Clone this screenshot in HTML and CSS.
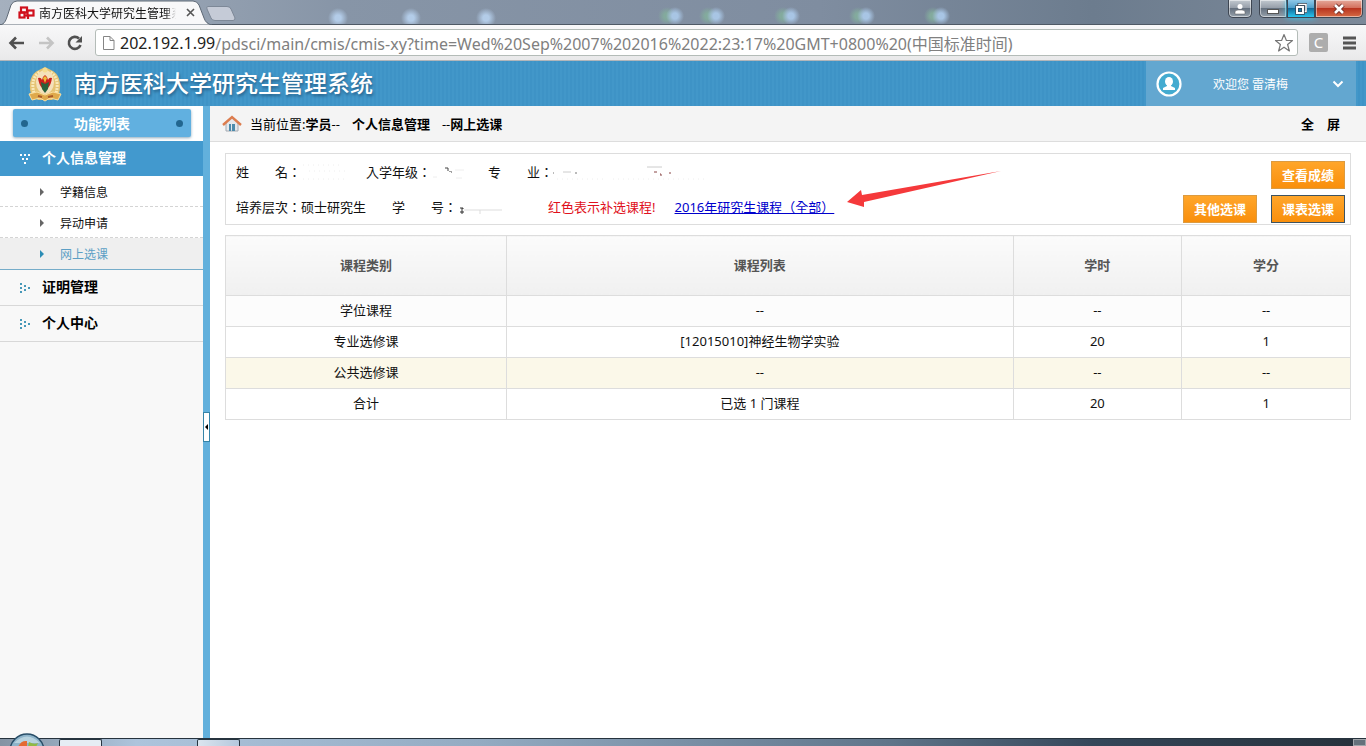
FILE: index.html
```html
<!DOCTYPE html>
<html lang="zh-CN">
<head>
  <meta charset="UTF-8">
  <meta name="viewport" content="width=device-width, initial-scale=1.0">
  <title>南方医科大学研究生管理系统</title>
  <link rel="stylesheet" href="styles.css">
</head>
<body>
  <!-- 标签栏 -->
  <div class="tabstrip">
    <div class="tab">
      <svg class="tab-shape" width="216" height="25" viewBox="0 0 216 25"><path d="M0 25C5 24 6 20 8 14L11 5Q13 1 17 1H193Q197 1 199 5L204 18Q206 24 212 25Z" fill="#f8f8f9" stroke="#5d6875"/></svg>
      <svg class="tab-logo" width="17" height="14" viewBox="0 0 17 14"><g fill="none" stroke="#d0101c" stroke-width="2.2"><rect x="3" y="1.500" width="6" height="5"/><rect x="1.500" y="6.500" width="5" height="5"/><rect x="9.500" y="4.500" width="6" height="5"/><path d="M6 9.500h4V13"/></g></svg>
      <span class="tab-title">南方医科大学研究生管理系统</span>
      <button class="tab-close" aria-label="关闭标签页"><svg width="9" height="9" viewBox="0 0 9 9"><path d="M1 1l7 7M8 1L1 8" stroke="#555" stroke-width="1.6"/></svg></button>
    </div>
    <button class="new-tab" aria-label="新标签页"><svg width="30" height="15" viewBox="0 0 30 15"><path d="M2 .5H21Q24 .5 25 3L29 12Q29 14.500 27 14.500H9Q6 14.500 5 12L1 3Q0 .5 2 .5Z" fill="#c5cbd7" stroke="#7d8897"/></svg></button>
    <div class="window-buttons">
      <button class="win profile" aria-label="用户"><svg width="12" height="12" viewBox="0 0 12 12"><circle cx="6" cy="3.500" r="2.500" fill="#fff"/><path d="M1 11V9q0-2 3-2h4q3 0 3 2v2z" fill="#fff" stroke="#555" stroke-width=".5"/></svg></button>
      <button class="win minimize" aria-label="最小化"><svg width="12" height="12" viewBox="0 0 12 12"><rect x=".5" y="6.500" width="11" height="4" fill="#fff" stroke="#555"/></svg></button>
      <button class="win restore" aria-label="还原"><svg width="12" height="12" viewBox="0 0 12 12"><g fill="none"><path d="M4 4V1.500h7v7H8.500" stroke="#345" stroke-width="3"/><path d="M4 4V1.500h7v7H8.500" stroke="#fff" stroke-width="1.500"/><rect x="2" y="4" width="6" height="6" stroke="#345" stroke-width="3.500"/><rect x="2" y="4" width="6" height="6" stroke="#fff" stroke-width="2"/></g></svg></button>
      <button class="win close" aria-label="关闭"><svg width="12" height="12" viewBox="0 0 12 12"><path d="M2 2l8 8M10 2l-8 8" stroke="#6b2a25" stroke-width="4.500"/><path d="M2 2l8 8M10 2l-8 8" stroke="#fff" stroke-width="2.600"/></svg></button>
    </div>
  </div>

  <!-- 地址栏 -->
  <div class="toolbar">
    <button class="nav" aria-label="后退"><svg width="18" height="16" viewBox="0 0 18 16"><path d="M16 8H3M8 2.500L2.500 8 8 13.500" fill="none" stroke="#505050" stroke-width="2.600"/></svg></button>
    <button class="nav" aria-label="前进"><svg width="18" height="16" viewBox="0 0 18 16"><path d="M2 8h13M10 2.500L15.500 8 10 13.500" fill="none" stroke="#c4c4c4" stroke-width="2.600"/></svg></button>
    <button class="nav" aria-label="刷新"><svg width="18" height="16" viewBox="0 0 18 16"><path d="M14.500 10A6 6 0 1 1 13 3.500" fill="none" stroke="#505050" stroke-width="2.600"/><path d="M16 1v6.500H9.500z" fill="#505050"/></svg></button>
    <div class="omnibox">
      <svg width="13" height="16" viewBox="0 0 13 16"><path d="M1.500 1.500H8L12 5.500V14.500H1.500zM8 1.500V5.500H12" fill="#fff" stroke="#858585"/></svg>
      <label class="host" for="url">202.192.1.99</label>
      <input id="url" type="text" value="/pdsci/main/cmis/cmis-xy?time=Wed%20Sep%2007%202016%2022:23:17%20GMT+0800%20(中国标准时间)">
      <button class="nav" aria-label="收藏"><svg width="20" height="20" viewBox="0 0 20 20"><path d="M10 1.500l2.400 6h6.100l-4.900 4 1.800 6.500-5.400-3.800L4.600 18l1.800-6.500-4.900-4h6.100z" fill="#fff" stroke="#777" stroke-width="1.200" stroke-linejoin="round"/></svg></button>
    </div>
    <button class="extension">C</button>
    <button class="nav" aria-label="菜单"><svg width="13" height="14" viewBox="0 0 13 14"><path d="M0 2h13M0 7h13M0 12h13" stroke="#555" stroke-width="3"/></svg></button>
  </div>

  <!-- 系统头部 -->
  <header class="header">
    <svg class="crest" width="36" height="36" viewBox="0 0 36 36">
      <path d="M4 28C1 17 4 7 12 4L18 1l6 3c8 3 11 13 8 24l-7 6H11z" fill="#e5c374"/>
      <path d="M7 27C4 17 7 9 13 6M29 27c3-10 0-18-6-21" fill="none" stroke="#f9e9b8" stroke-width="3" stroke-dasharray="2 1"/>
      <ellipse cx="18" cy="16" rx="9" ry="12" fill="#f4e1bb"/>
      <path d="M11 12q3-1 4 2l1-3 2-2 2 2 1 3q1-3 4-2-1 7-4 10h-6q-3-3-4-10z" fill="#c9201d"/>
      <path d="M14 16l4 2 4-2-1 7-3 4-3-4z" fill="#29613b"/>
      <path d="M16 12l2-2 2 2-2 5z" fill="#efbd38"/>
      <path d="M2 28l8-2 8 3 8-3 8 2-3 6-8-2-5 3-5-3-8 2z" fill="#dfa94c" stroke="#fae0a1"/>
      <circle cx="18" cy="4" r="2.500" fill="#f5dc91"/>
      <path d="M11 30l4 1M21 31l5-1" stroke="#a95a28" stroke-width="2"/>
    </svg>
    <h1>南方医科大学研究生管理系统</h1>
    <a class="user" href="#">
      <svg width="26" height="26" viewBox="0 0 26 26"><circle cx="13" cy="13" r="11.500" fill="#44abd0" stroke="#fff" stroke-width="2.200"/><ellipse cx="13" cy="10.500" rx="4" ry="4.500" fill="#fff"/><path d="M11 13h4v2l4 2v2H7v-2l4-2z" fill="#fff"/></svg>
      <span>欢迎您 雷清梅</span>
      <svg class="arrow" width="12" height="8" viewBox="0 0 12 8"><path d="M1.500 1.500L6 6l4.500-4.500" fill="none" stroke="#fff" stroke-width="2"/></svg>
    </a>
  </header>

  <div class="main">
    <!-- 左侧菜单 -->
    <nav class="sidebar">
      <div class="menu-head"><h2>功能列表</h2></div>
      <a class="group open" href="#"><svg width="12" height="12" viewBox="0 0 12 12"><path d="M1 1h2v2H1zM5 1h2v2H5zM9 1h2v2H9zM3 5h2v2H3zM7 5h2v2H7zM5 9h2v2H5z" fill="#fff"/></svg>个人信息管理</a>
      <ul class="submenu">
        <li><a href="#">学籍信息</a></li>
        <li><a href="#">异动申请</a></li>
        <li class="active"><a href="#">网上选课</a></li>
      </ul>
      <a class="group" href="#"><svg width="12" height="12" viewBox="0 0 12 12"><path d="M1 1h2v2H1zM1 5h2v2H1zM1 9h2v2H1zM5 3h2v2H5zM5 7h2v2H5zM9 5h2v2H9z" fill="#4798b8"/></svg>证明管理</a>
      <a class="group" href="#"><svg width="12" height="12" viewBox="0 0 12 12"><path d="M1 1h2v2H1zM1 5h2v2H1zM1 9h2v2H1zM5 3h2v2H5zM5 7h2v2H5zM9 5h2v2H9z" fill="#4798b8"/></svg>个人中心</a>
    </nav>
    <div class="splitter"><button class="collapse" aria-label="收起菜单"></button></div>

    <div class="content">
      <div class="breadcrumb">
        <svg width="20" height="18" viewBox="0 0 20 18"><path d="M4 8v8h12V8l-6-6z" fill="#e5e8ec" stroke="#a4aab2"/><path d="M7 9h2v7H7zM10 9h3v7h-3z" fill="#4d8bab"/><path d="M1 10L10 2l9 8" fill="none" stroke="#dc7d4f" stroke-width="2.400"/></svg>
        <span>当前位置:<b>学员</b>--</span>
        <b>个人信息管理</b>
        <span>--<b>网上选课</b></span>
        <a class="fullscreen" href="#">全&emsp;屏</a>
      </div>

      <div class="info">
        <div class="fields">
          <div class="line">
            <span>姓&emsp;&emsp;名：</span>
            <span class="value name"><svg width="60" height="20" viewBox="0 0 60 20"><path d="M2 3h38M8 9h40M2 17h45" stroke="#eee" stroke-dasharray="1 4"/></svg></span>
            <span>入学年级：</span>
            <span class="value grade"><svg width="40" height="20" viewBox="0 0 40 20"><path d="M14 6h3v3M20 10h1M19 9v1" stroke="#444" fill="none"/><path d="M2 15h4M24 8h9M25 16h6" stroke="#eee"/></svg></span>
            <span>专&emsp;&emsp;业：</span>
            <span class="value major"><svg width="166" height="20" viewBox="0 0 166 20"><path d="M0 11h1M22 11h2" stroke="#777"/><path d="M10 10h8M94 5h15" stroke="#ccc"/><path d="M101 10h3M107 12h1v2M116 11h2" stroke="#844" fill="none"/><path d="M4 17h50M60 17h94" stroke="#eee" stroke-dasharray="1 4"/></svg></span>
          </div>
          <div class="line">
            <span>培养层次：硕士研究生</span>
            <span class="student-no">学&emsp;&emsp;号：</span>
            <span class="value number"><svg width="50" height="20" viewBox="0 0 50 20"><path d="M3 11h3v1H4M3 15h4M5 13v4" stroke="#333" fill="none"/><path d="M7 13h38M23 13v4" stroke="#ddd"/></svg></span>
            <span class="notice">红色表示补选课程!</span>
            <a class="courses" href="#">2016年研究生课程（全部）</a>
            <svg class="pointer" width="154" height="38" viewBox="0 0 154 38"><path d="M0 32L14 20L15 25L154 1L17 32L17 37Z" fill="#f5393b"/></svg>
          </div>
        </div>
        <div class="actions">
          <button>查看成绩</button>
          <div class="pair">
            <button>其他选课</button>
            <button class="current">课表选课</button>
          </div>
        </div>
      </div>

      <table class="course-table">
        <thead>
          <tr><th class="type">课程类别</th><th class="list">课程列表</th><th class="num">学时</th><th class="num">学分</th></tr>
        </thead>
        <tbody>
          <tr class="odd"><td>学位课程</td><td>--</td><td>--</td><td>--</td></tr>
          <tr><td>专业选修课</td><td>[12015010]神经生物学实验</td><td>20</td><td>1</td></tr>
          <tr class="hover"><td>公共选修课</td><td>--</td><td>--</td><td>--</td></tr>
          <tr><td>合计</td><td>已选 1 门课程</td><td>20</td><td>1</td></tr>
        </tbody>
      </table>
    </div>
  </div>

  <!-- 任务栏 -->
  <div class="taskbar">
    <svg class="start" width="36" height="14" viewBox="0 0 36 14"><circle cx="18" cy="18" r="17" fill="#8eb4ca" stroke="#294e68" stroke-width="1.500"/><path d="M5 10q13-13 26 0z" fill="#b8d3df"/><path d="M9 14q3-7 9-6v6H9z" fill="#e56a32"/><path d="M20 9q5 3 9 1l-2 4h-8z" fill="#91b944"/></svg>
    <span class="task first"></span>
    <span class="task"></span>
    <span class="show-desktop"></span>
  </div>
</body>
</html>
```

FILE: styles.css
```css
* {
  box-sizing: border-box;
}

body {
  margin: 0;
  height: 100vh;
  display: flex;
  flex-direction: column;
  overflow: hidden;
  background: #fff;
  color: #111;
  font-family: "Noto Sans", "Noto Sans CJK SC", sans-serif;
  font-size: 13px;
}

a {
  color: inherit;
  text-decoration: none;
}

button,
input {
  margin: 0;
  padding: 0;
  border: none;
  background: none;
  font-family: inherit;
}

svg {
  display: block;
  flex-shrink: 0;
}

/* browser */
.tabstrip {
  display: flex;
  flex-shrink: 0;
  height: 25px;
  border-bottom: 1px solid #4f5965;
  background:
    radial-gradient(circle at 338px 18px, #b3cce8 3px, transparent 10px),
    radial-gradient(circle at 411px 18px, #b3cce8 3px, transparent 10px),
    radial-gradient(circle at 486px 18px, #b3cce8 3px, transparent 10px),
    radial-gradient(circle at 675px 16px, #a8c5e4 3px, transparent 9px),
    radial-gradient(circle at 667px 16px, #83aa9d 3px, transparent 9px),
    radial-gradient(circle at 716px 16px, #a8c5e4 3px, transparent 9px),
    radial-gradient(circle at 708px 16px, #83aa9d 3px, transparent 9px),
    radial-gradient(circle at 791px 16px, #a8c5e4 3px, transparent 9px),
    radial-gradient(circle at 783px 16px, #83aa9d 3px, transparent 9px),
    radial-gradient(circle at 866px 16px, #a8c5e4 3px, transparent 9px),
    radial-gradient(circle at 858px 16px, #83aa9d 3px, transparent 9px),
    radial-gradient(circle at 941px 16px, #a8c5e4 3px, transparent 9px),
    radial-gradient(circle at 933px 16px, #83aa9d 3px, transparent 9px),
    linear-gradient(90deg, #a5b0be, #8795a7 25%, #7f8da0 60%, #6c7c8e 80%, #7c8999);
  background-size: 100% 100%, 100% 100%, 100% 100%, 0 0, 0 0;
  background-size: auto;
}

.tab {
  position: relative;
  display: flex;
  align-items: center;
  width: 206px;
  height: 25px;
  padding-left: 18px;
}

.tab-shape {
  position: absolute;
  left: 0;
  top: 0;
}

.tab-logo,
.tab-title,
.tab-close {
  position: relative;
}

.tab-title {
  width: 137px;
  margin: 0 10px 0 4px;
  overflow: hidden;
  white-space: nowrap;
  font-size: 12px;
  -webkit-mask-image: linear-gradient(90deg, #000 92%, transparent);
}

.new-tab {
  height: 15px;
  margin-top: 6px;
}

.window-buttons {
  display: flex;
  height: 18px;
  margin-left: auto;
  padding-right: 3px;
}

.win {
  display: flex;
  justify-content: center;
  align-items: center;
  width: 28px;
  border: 1px solid #3e4652;
  border-top: none;
  background: linear-gradient(#c2c9d0, #929ba6 50%, #667280 50%, #95a0aa);
  box-shadow: inset 0 0 0 1px rgba(255, 255, 255, 0.5);
}

.profile {
  width: 24px;
  margin-right: 7px;
  border-radius: 0 0 5px 5px;
}

.minimize {
  border-radius: 0 0 0 5px;
}

.restore {
  background: linear-gradient(#8ec8e8, #4a9cc8 50%, #126d9c 50%, #29c4ee);
  box-shadow: 0 0 6px #37c8f2;
}

.close {
  width: 48px;
  border-radius: 0 0 5px 0;
  background: linear-gradient(#e5a99b, #d26b58 50%, #b93520 50%, #d66a44);
}

.toolbar {
  display: flex;
  flex-shrink: 0;
  align-items: center;
  gap: 11px;
  height: 36px;
  padding: 0 10px 0 8px;
  border-bottom: 1px solid #b2b6ba;
  background: linear-gradient(#f8f8f9, #e9e9ea);
}

.omnibox {
  display: flex;
  flex: 1;
  align-items: center;
  height: 27px;
  padding: 0 3px 0 6px;
  border: 1px solid #b4bcb8;
  border-radius: 3px;
  background: #fff;
  font-size: 16px;
}

.host {
  margin-left: 5px;
  color: #222;
}

.omnibox input {
  flex: 1;
  min-width: 0;
  height: 24px;
  color: #808080;
  font-size: 16px;
}

.extension {
  width: 19px;
  height: 19px;
  margin-right: 4px;
  border-radius: 2px;
  background: #adadad;
  color: #fff;
  font-size: 15px;
  line-height: 19px;
}

/* header */
.header {
  display: flex;
  flex-shrink: 0;
  align-items: center;
  height: 45px;
  padding: 0 10px 0 27px;
  background: repeating-linear-gradient(90deg, #4297c9 0, #4297c9 2px, #3e93c6 2px, #3e93c6 4px);
  color: #fff;
}

.header h1 {
  margin: 0 0 2px 11px;
  font-size: 23px;
  font-weight: 500;
  line-height: 32px;
  text-shadow: 1px 2px 3px #245f88;
}

.user {
  display: flex;
  align-items: center;
  width: 210px;
  height: 45px;
  margin-left: auto;
  padding: 0 12px 0 10px;
  background: #63a7d0;
  font-size: 12px;
}

.user span {
  margin-left: 31px;
}

.user .arrow {
  margin-left: auto;
}

.main {
  display: flex;
  flex: 1;
  min-height: 0;
}

/* sidebar */
.sidebar {
  width: 203px;
  background: #f8f8f8;
}

.menu-head {
  height: 35px;
  padding: 3px 12px 4px 13px;
  background: #fff;
}

.menu-head h2 {
  display: flex;
  justify-content: space-between;
  align-items: center;
  height: 28px;
  margin: 0;
  padding: 0 8px;
  border-radius: 2px;
  background: #61b0e0;
  box-shadow: 0 1px 3px #8daabd;
  color: #fff;
  font-size: 14px;
}

.menu-head h2::before,
.menu-head h2::after {
  content: "";
  width: 7px;
  height: 7px;
  border-radius: 50%;
  background: #22668f;
}

.group {
  display: flex;
  align-items: center;
  gap: 11px;
  height: 36px;
  padding: 0 0 3px 19px;
  border-bottom: 1px solid #d8d8d8;
  color: #000;
  font-size: 14px;
  font-weight: bold;
}

.group svg {
  margin-top: 3px;
}

.group.open {
  height: 35px;
  border-bottom: none;
  background: #4299ce;
  color: #fff;
}

.submenu {
  margin: 0;
  padding: 0;
  border-bottom: 1px solid #75acc9;
  background: #fff;
  list-style: none;
}

.submenu li {
  height: 31px;
  border-bottom: 1px dashed #d4d4d4;
}

.submenu a {
  display: flex;
  align-items: center;
  gap: 16px;
  height: 31px;
  padding-left: 40px;
  font-size: 12px;
}

.submenu a::before {
  content: "";
  border: 4px solid transparent;
  border-right: none;
  border-left-color: #666;
}

.submenu .active {
  border-bottom: none;
  background: #efefef;
  color: #5c9fc5;
}

.submenu .active a::before {
  border-left-color: #2c8db5;
}

.splitter {
  display: flex;
  width: 7px;
  padding-top: 306px;
  background: #62b0dc;
}

.collapse {
  display: flex;
  justify-content: center;
  align-items: center;
  width: 7px;
  height: 30px;
  border: 1px solid #3684a8;
  background: #fff;
}

.collapse::before {
  content: "";
  border: 3px solid transparent;
  border-left: none;
  border-right-color: #000;
}

/* content */
.content {
  flex: 1;
  min-width: 0;
}

.breadcrumb {
  display: flex;
  align-items: center;
  gap: 12px;
  height: 36px;
  padding: 0 26px 0 12px;
  border-bottom: 1px solid #ddd;
  background: #f4f4f4;
  color: #000;
}

.breadcrumb svg {
  margin-right: -4px;
}

.fullscreen {
  margin-left: auto;
  font-weight: bold;
}

.info {
  display: flex;
  justify-content: space-between;
  margin: 11px 15px 10px;
  padding: 0 5px 0 10px;
  border: 1px solid #ddd;
}

/* full-width colons and brackets centred in their cell */
.line {
  position: relative;
  display: flex;
  align-items: center;
  height: 35px;
  white-space: nowrap;
  font-family: "Noto Sans", "Noto Sans CJK TC", sans-serif;
  font-feature-settings: "locl" 0;
}

.name {
  width: 65px;
}

.grade {
  width: 57px;
}

.student-no {
  margin-left: 26px;
}

.number {
  width: 91px;
}

.notice {
  color: #e01020;
}

.courses {
  margin-left: 19px;
  color: #0000cc;
  text-decoration: underline;
}

/* hand-drawn arrow over the panel */
.pointer {
  position: absolute;
  left: 100%;
  bottom: 16px;
  margin-left: 13px;
}

.actions {
  display: flex;
  flex-direction: column;
  align-items: flex-end;
  gap: 6px;
  padding-top: 7px;
}

.pair {
  display: flex;
  gap: 14px;
}

.actions button {
  width: 74px;
  height: 28px;
  padding-bottom: 2px;
  border: 1px solid #dc9b40;
  background: linear-gradient(#ffa62b, #f98f0c);
  color: #fff;
  font-size: 13px;
  font-weight: bold;
}

.actions .pair {
  height: 28px;
}

.actions .current {
  border-color: #3d5361;
}

.course-table {
  width: calc(100% - 30px);
  margin: 0 15px;
  border-collapse: collapse;
  table-layout: fixed;
  text-align: center;
}

.course-table th,
.course-table td {
  height: 31px;
  padding: 0 0 3px;
  border: 1px solid #ddd;
}

.course-table th {
  height: 60px;
  background: linear-gradient(#fbfbfb, #f0f0f0);
  color: #555;
}

.course-table .type {
  width: 25%;
}

.course-table .list {
  width: 45%;
}

.course-table .num {
  width: 15%;
}

.odd {
  background: #fcfcfc;
}

.hover {
  background: #fbf8e9;
}

.taskbar {
  display: flex;
  flex-shrink: 0;
  align-items: flex-end;
  height: 8px;
  padding-left: 9px;
  border-top: 1px solid #26333e;
  background: linear-gradient(90deg, #8493a3, #adc4dc 10%, #94abc2 35%, #60758a 65%, #35475a 80%, #26313b);
}

.start {
  margin-bottom: -1px;
}

.task {
  width: 43px;
  height: 7px;
  margin-left: 95px;
  border: 1px solid #27343f;
  border-bottom: none;
  border-radius: 2px 2px 0 0;
  background: linear-gradient(90deg, #dbe5ef, #b4c8dd);
}

.task.first {
  margin-left: 14px;
  background: #e6edf4;
}

.show-desktop {
  width: 13px;
  height: 7px;
  margin-left: auto;
  border: 1px solid #a0a5aa;
  background: #65717b;
}
```
